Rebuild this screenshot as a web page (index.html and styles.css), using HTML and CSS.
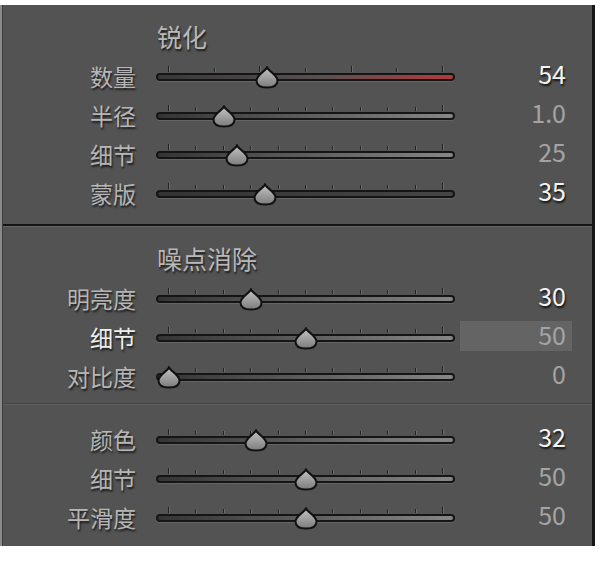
FILE: index.html
```html
<html>

<head>
  <meta charset="utf8">
  <title>细节</title>
  <link rel="stylesheet" href="styles.css">
</head>

<body>
  <svg class="defs" width="0" height="0">
    <defs>
      <linearGradient id="knob" x1="0" y1="0" x2="0" y2="1">
        <stop offset="0" stop-color="#c4c4c4" />
        <stop offset="1" stop-color="#7c7c7c" />
      </linearGradient>
    </defs>
  </svg>

  <div class="panel">
    <section class="group">
      <h2>锐化</h2>
      <div class="row">
        <span class="label">数量</span>
        <div class="slider red" style="--p:.36">
          <div class="ticks"><i class="tall"></i><i></i><i class="tall"></i><i></i><i class="tall"></i><i></i><i class="tall"></i></div>
          <div class="track"></div>
          <svg class="thumb" viewBox="0 0 24 23"><path d="M12 1.5C13.5 5 22.5 9 22.5 14.5C22.5 19.5 18 21.5 12 21.5C6 21.5 1.5 19.5 1.5 14.5C1.5 9 10.5 5 12 1.5Z" /></svg>
        </div>
        <span class="value hi">54</span>
      </div>
      <div class="row">
        <span class="label">半径</span>
        <div class="slider" style="--p:.2">
          <div class="ticks"><i class="tall"></i><i></i><i></i><i></i><i></i><i></i><i></i><i></i><i></i><i></i><i class="tall"></i></div>
          <div class="track"></div>
          <svg class="thumb" viewBox="0 0 24 23"><path d="M12 1.5C13.5 5 22.5 9 22.5 14.5C22.5 19.5 18 21.5 12 21.5C6 21.5 1.5 19.5 1.5 14.5C1.5 9 10.5 5 12 1.5Z" /></svg>
        </div>
        <span class="value">1.0</span>
      </div>
      <div class="row">
        <span class="label">细节</span>
        <div class="slider" style="--p:.25">
          <div class="ticks"><i class="tall"></i><i></i><i></i><i></i><i></i><i></i><i></i><i></i><i></i><i></i><i class="tall"></i></div>
          <div class="track"></div>
          <svg class="thumb" viewBox="0 0 24 23"><path d="M12 1.5C13.5 5 22.5 9 22.5 14.5C22.5 19.5 18 21.5 12 21.5C6 21.5 1.5 19.5 1.5 14.5C1.5 9 10.5 5 12 1.5Z" /></svg>
        </div>
        <span class="value">25</span>
      </div>
      <div class="row">
        <span class="label">蒙版</span>
        <div class="slider dark" style="--p:.35">
          <div class="ticks"><i class="tall"></i><i></i><i></i><i></i><i></i><i></i><i></i><i></i><i></i><i></i><i class="tall"></i></div>
          <div class="track"></div>
          <svg class="thumb" viewBox="0 0 24 23"><path d="M12 1.5C13.5 5 22.5 9 22.5 14.5C22.5 19.5 18 21.5 12 21.5C6 21.5 1.5 19.5 1.5 14.5C1.5 9 10.5 5 12 1.5Z" /></svg>
        </div>
        <span class="value hi">35</span>
      </div>
    </section>

    <section class="group noise">
      <h2>噪点消除</h2>
      <div class="row">
        <span class="label">明亮度</span>
        <div class="slider" style="--p:.3">
          <div class="ticks"><i class="tall"></i><i></i><i></i><i></i><i></i><i></i><i></i><i></i><i></i><i></i><i class="tall"></i></div>
          <div class="track"></div>
          <svg class="thumb" viewBox="0 0 24 23"><path d="M12 1.5C13.5 5 22.5 9 22.5 14.5C22.5 19.5 18 21.5 12 21.5C6 21.5 1.5 19.5 1.5 14.5C1.5 9 10.5 5 12 1.5Z" /></svg>
        </div>
        <span class="value hi">30</span>
      </div>
      <div class="row active">
        <span class="label">细节</span>
        <div class="slider" style="--p:.5">
          <div class="ticks"><i class="tall"></i><i></i><i></i><i></i><i></i><i></i><i></i><i></i><i></i><i></i><i class="tall"></i></div>
          <div class="track"></div>
          <svg class="thumb" viewBox="0 0 24 23"><path d="M12 1.5C13.5 5 22.5 9 22.5 14.5C22.5 19.5 18 21.5 12 21.5C6 21.5 1.5 19.5 1.5 14.5C1.5 9 10.5 5 12 1.5Z" /></svg>
        </div>
        <span class="value">50</span>
      </div>
      <div class="row">
        <span class="label">对比度</span>
        <div class="slider" style="--p:0">
          <div class="ticks"><i class="tall"></i><i></i><i></i><i></i><i></i><i></i><i></i><i></i><i></i><i></i><i class="tall"></i></div>
          <div class="track"></div>
          <svg class="thumb" viewBox="0 0 24 23"><path d="M12 1.5C13.5 5 22.5 9 22.5 14.5C22.5 19.5 18 21.5 12 21.5C6 21.5 1.5 19.5 1.5 14.5C1.5 9 10.5 5 12 1.5Z" /></svg>
        </div>
        <span class="value">0</span>
      </div>
    </section>

    <section class="group color">
      <div class="row">
        <span class="label">颜色</span>
        <div class="slider" style="--p:.32">
          <div class="ticks"><i class="tall"></i><i></i><i></i><i></i><i></i><i></i><i></i><i></i><i></i><i></i><i class="tall"></i></div>
          <div class="track"></div>
          <svg class="thumb" viewBox="0 0 24 23"><path d="M12 1.5C13.5 5 22.5 9 22.5 14.5C22.5 19.5 18 21.5 12 21.5C6 21.5 1.5 19.5 1.5 14.5C1.5 9 10.5 5 12 1.5Z" /></svg>
        </div>
        <span class="value hi">32</span>
      </div>
      <div class="row">
        <span class="label">细节</span>
        <div class="slider" style="--p:.5">
          <div class="ticks"><i class="tall"></i><i></i><i></i><i></i><i></i><i></i><i></i><i></i><i></i><i></i><i class="tall"></i></div>
          <div class="track"></div>
          <svg class="thumb" viewBox="0 0 24 23"><path d="M12 1.5C13.5 5 22.5 9 22.5 14.5C22.5 19.5 18 21.5 12 21.5C6 21.5 1.5 19.5 1.5 14.5C1.5 9 10.5 5 12 1.5Z" /></svg>
        </div>
        <span class="value">50</span>
      </div>
      <div class="row">
        <span class="label">平滑度</span>
        <div class="slider" style="--p:.5">
          <div class="ticks"><i class="tall"></i><i></i><i></i><i></i><i></i><i></i><i></i><i></i><i></i><i></i><i class="tall"></i></div>
          <div class="track"></div>
          <svg class="thumb" viewBox="0 0 24 23"><path d="M12 1.5C13.5 5 22.5 9 22.5 14.5C22.5 19.5 18 21.5 12 21.5C6 21.5 1.5 19.5 1.5 14.5C1.5 9 10.5 5 12 1.5Z" /></svg>
        </div>
        <span class="value">50</span>
      </div>
    </section>
  </div>
</body>

</html>
```

FILE: styles.css
```css
body {
  margin: 0;
  background: #FFF;
  font-family: "Noto Sans CJK SC", sans-serif;
}

.defs {
  position: absolute;
}

.panel {
  box-sizing: border-box;
  width: 593px;
  margin: 5px 0 0 2px;
  background: #535353;
  border-left: 1px solid #3c3c3c;
  border-right: 3px solid #161616;
  box-shadow: -2px 0 0 #8a8a8a;
}

.group {
  padding: 12px 0 11px;
  border-bottom: 2px solid #141414;
}

.noise {
  padding: 12px 0 7px;
  border-top: 1px solid #676767;
  border-bottom: 1px solid #454545;
}

.color {
  padding: 15px 0 9px;
  border-top: 1px solid #5f5f5f;
  border-bottom: 0;
}

h2 {
  margin: 0 0 0 154px;
  height: 40px;
  line-height: 38px;
  font-size: 25px;
  font-weight: normal;
  color: #b9b9b9;
  text-shadow: 1px 2px 2px rgba(0, 0, 0, .7);
  cursor: default;
  user-select: none;
}

.row {
  display: grid;
  grid-template-columns: 148px 299px 112px;
  column-gap: 5px;
  align-items: center;
  height: 39px;
}

.label {
  padding-right: 15px;
  text-align: right;
  font-size: 23px;
  line-height: 39px;
  color: #b6b6b6;
  text-shadow: 1px 2px 2px rgba(0, 0, 0, .7);
}

.active .label {
  color: #EEE;
}

.value {
  box-sizing: border-box;
  height: 30px;
  margin-bottom: 3px;
  padding: 0 6px 3px 0;
  text-align: right;
  font-size: 25px;
  line-height: 27px;
  color: #a4a4a4;
}

.value.hi {
  color: #F4F4F4;
  text-shadow: 1px 2px 2px rgba(0, 0, 0, .8);
}

.active .value {
  background: #646464;
}

.slider {
  position: relative;
  box-sizing: border-box;
  height: 39px;
  padding-top: 8.5px;
}

.ticks {
  display: flex;
  justify-content: space-between;
  align-items: flex-end;
  height: 6px;
  margin-bottom: 1px;
  padding: 0 12px;
}

.ticks i {
  width: 1px;
  height: 4px;
  background: #222;
  box-shadow: 1px 0 0 #6c6c6c;
}

.ticks i.tall {
  height: 6px;
}

.track {
  box-sizing: border-box;
  height: 8px;
  border: 2px solid #151515;
  border-radius: 4px;
  background: linear-gradient(90deg, #343434, #868686);
  box-shadow: 0 1px 0 rgba(255, 255, 255, .1);
}

.dark .track {
  background: linear-gradient(90deg, #333, #464646);
}

.red .track {
  background: linear-gradient(90deg, #383838 0%, #595050 55%, #b33a3a 100%);
}

.thumb {
  position: absolute;
  top: 8.5px;
  left: calc(13px + var(--p) * (100% - 26px));
  width: 24px;
  height: 23px;
  transform: translateX(-50%);
}

.thumb path {
  fill: url(#knob);
  stroke: #111;
  stroke-width: 2;
}
```
